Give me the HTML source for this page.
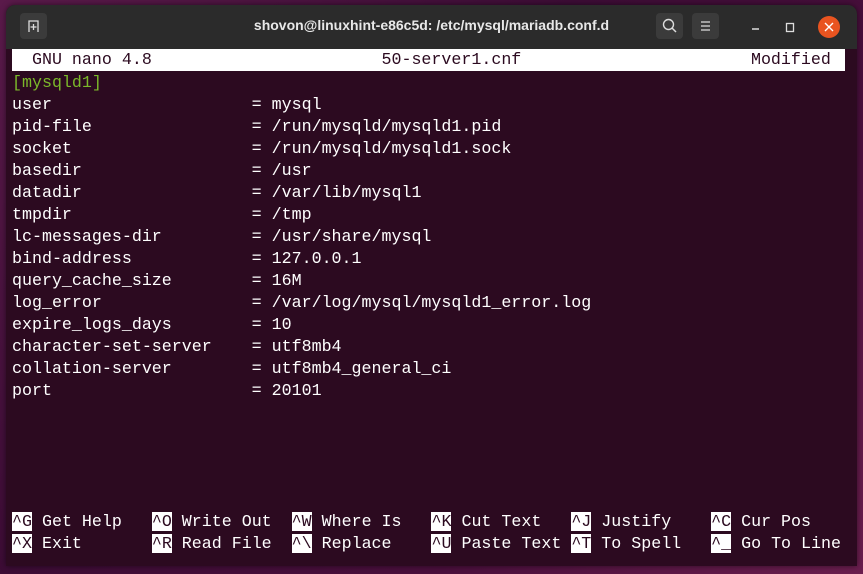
<!DOCTYPE html>
<html><head><style>
body{margin:0;width:863px;height:574px;overflow:hidden;background:linear-gradient(135deg,#5a1a4a 0%,#3c0c35 40%,#4a0f3c 70%,#6a1e4e 100%);position:relative;font-family:"Liberation Mono",monospace}
.win{position:absolute;left:6px;top:5px;width:851px;height:561px;background:#2c0a20;border-radius:9px 9px 0 0;overflow:hidden;box-shadow:0 0 6px rgba(0,0,0,.5)}
.tb{position:absolute;left:0;top:0;width:851px;height:44px;background:#2b2b2b}
.btn{position:absolute;top:8px;width:27px;height:26px;background:#3b3b3b;border-radius:4px}
.title{position:absolute;left:0;width:851px;top:12px;text-align:center;color:#e8e8e8;font:bold 14px "Liberation Sans",sans-serif}
.row{position:absolute;left:6px;height:22px;line-height:22px;font-size:16.65px;color:#fff;white-space:pre}
.hdr{position:absolute;left:6px;top:44px;width:833px;height:22px;background:#fff;color:#2c0a20}
.k{background:#fff;color:#2c0a20}
</style></head><body>
<div class="win">
<div class="tb">
 <div class="btn" style="left:14px"><svg width="27" height="26"><path d="M9 19V8h9v11" fill="none" stroke="#ddd" stroke-width="1.3"/><path d="M13.5 11v6M10.5 14h6" stroke="#ddd" stroke-width="1.3"/></svg></div>
 <div class="title">shovon@linuxhint-e86c5d: /etc/mysql/mariadb.conf.d</div>
 <div class="btn" style="left:650px"><svg width="27" height="26"><circle cx="12.5" cy="11.5" r="5" fill="none" stroke="#ddd" stroke-width="1.4"/><path d="M16 15l4 4" stroke="#ddd" stroke-width="1.5"/></svg></div>
 <div class="btn" style="left:686px"><svg width="27" height="26"><path d="M9 9h9M9 13h9M9 17h9" stroke="#ddd" stroke-width="1.3"/></svg></div>
 <svg style="position:absolute;left:740px;top:10px" width="100" height="26"><path d="M6 14h7" stroke="#ddd" stroke-width="1.4"/><rect x="40.5" y="8.5" width="7" height="8" fill="none" stroke="#ddd" stroke-width="1.3"/><circle cx="83" cy="12" r="11" fill="#e95420"/><path d="M79 8l8 8M87 8l-8 8" stroke="#fff" stroke-width="1.4"/></svg>
</div>
<div class="row hdr">  GNU nano 4.8                       50-server1.cnf                       Modified</div>
<div class="row" style="top:67px;color:#7bb82a">[mysqld1]</div>
<div class="row" style="top:89px">user                    = mysql
pid-file                = /run/mysqld/mysqld1.pid
socket                  = /run/mysqld/mysqld1.sock
basedir                 = /usr
datadir                 = /var/lib/mysql1
tmpdir                  = /tmp
lc-messages-dir         = /usr/share/mysql
bind-address            = 127.0.0.1
query_cache_size        = 16M
log_error               = /var/log/mysql/mysqld1_error.log
expire_logs_days        = 10
character-set-server    = utf8mb4
collation-server        = utf8mb4_general_ci
port                    = 20101</div>
<div class="row" style="top:506px"><span class="k">^G</span> Get Help   <span class="k">^O</span> Write Out  <span class="k">^W</span> Where Is   <span class="k">^K</span> Cut Text   <span class="k">^J</span> Justify    <span class="k">^C</span> Cur Pos
<span class="k">^X</span> Exit       <span class="k">^R</span> Read File  <span class="k">^\</span> Replace    <span class="k">^U</span> Paste Text <span class="k">^T</span> To Spell   <span class="k">^_</span> Go To Line</div>
</div>
</body></html>
